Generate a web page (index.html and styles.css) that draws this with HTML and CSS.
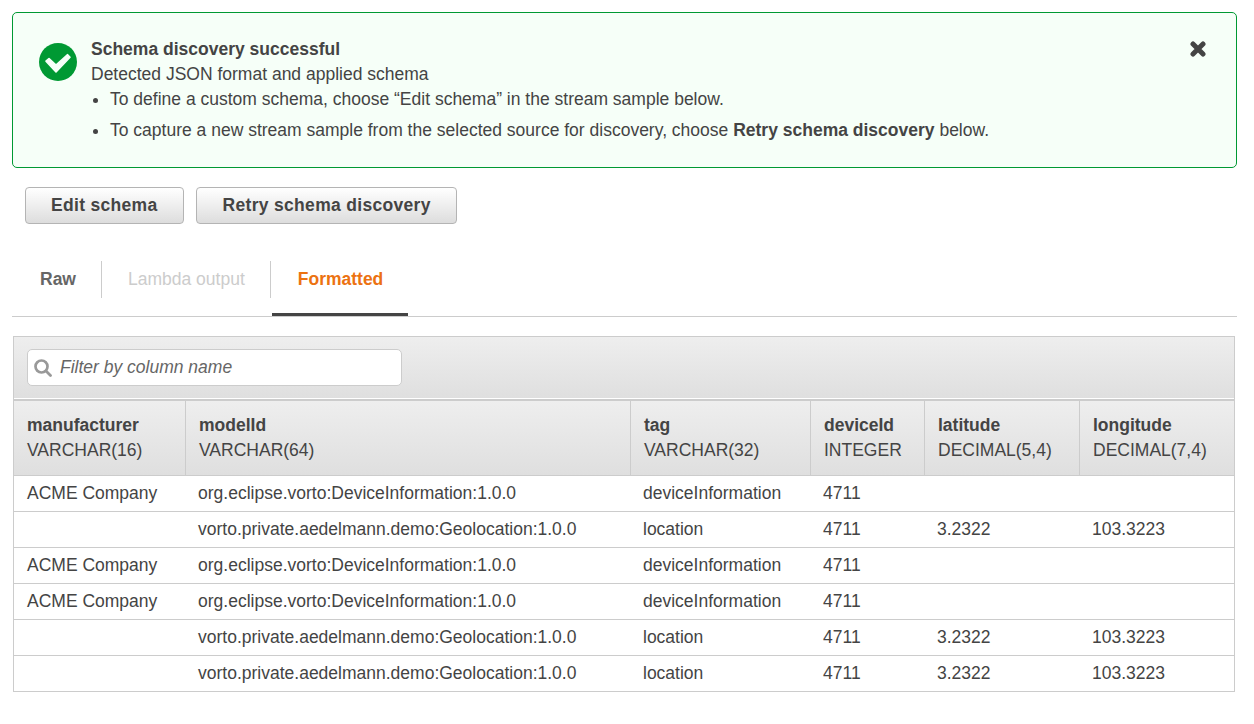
FILE: index.html
```html
<!DOCTYPE html>
<html lang="en">
<head>
<meta charset="utf-8">
<title>Schema discovery</title>
<link rel="stylesheet" href="styles.css">
</head>
<body>
<section class="alert">
  <svg class="alert-icon" viewBox="0 0 38 38"><circle cx="19" cy="19" r="19" fill="#093"/><path d="M7 18.200L10 15.600L17 22.200L28.600 11.700L31 14.300L17 29z" fill="#f6fff8" stroke="#f6fff8" stroke-width="1.600" stroke-linejoin="round"/></svg>
  <div class="alert-body">
    <strong>Schema discovery successful</strong>
    <div>Detected JSON format and applied schema</div>
    <ul class="alert-list">
      <li>To define a custom schema, choose “Edit schema” in the stream sample below.</li>
      <li>To capture a new stream sample from the selected source for discovery, choose <strong>Retry schema discovery</strong> below.</li>
    </ul>
  </div>
  <svg class="alert-close" viewBox="0 0 16 16"><path d="M3 3l10 10M13 3L3 13" stroke="#444" stroke-width="5" stroke-linecap="round"/></svg>
</section>
<div class="actions">
  <button class="btn">Edit schema</button>
  <button class="btn btn-wide">Retry schema discovery</button>
</div>
<nav class="tabs">
  <a class="tab">Raw</a>
  <a class="tab disabled">Lambda output</a>
  <a class="tab active">Formatted</a>
</nav>
<section class="grid">
  <div class="filter-bar">
    <label class="filter">
      <svg class="search" viewBox="0 0 18 18"><circle cx="7.500" cy="7.500" r="6" fill="none" stroke="#999" stroke-width="2.700"/><path d="M12 12l4.500 4.500" stroke="#999" stroke-width="2.800" stroke-linecap="round"/></svg>
      <span>Filter by column name</span>
    </label>
  </div>
  <table class="data">
    <colgroup><col class="c1"><col class="c2"><col class="c3"><col class="c4"><col class="c5"><col class="c6"></colgroup>
    <thead>
      <tr>
        <th>manufacturer<span>VARCHAR(16)</span></th>
        <th>modelId<span>VARCHAR(64)</span></th>
        <th>tag<span>VARCHAR(32)</span></th>
        <th>deviceId<span>INTEGER</span></th>
        <th>latitude<span>DECIMAL(5,4)</span></th>
        <th>longitude<span>DECIMAL(7,4)</span></th>
      </tr>
    </thead>
    <tbody>
      <tr><td>ACME Company</td><td>org.eclipse.vorto:DeviceInformation:1.0.0</td><td>deviceInformation</td><td>4711</td><td></td><td></td></tr>
      <tr><td></td><td>vorto.private.aedelmann.demo:Geolocation:1.0.0</td><td>location</td><td>4711</td><td>3.2322</td><td>103.3223</td></tr>
      <tr><td>ACME Company</td><td>org.eclipse.vorto:DeviceInformation:1.0.0</td><td>deviceInformation</td><td>4711</td><td></td><td></td></tr>
      <tr><td>ACME Company</td><td>org.eclipse.vorto:DeviceInformation:1.0.0</td><td>deviceInformation</td><td>4711</td><td></td><td></td></tr>
      <tr><td></td><td>vorto.private.aedelmann.demo:Geolocation:1.0.0</td><td>location</td><td>4711</td><td>3.2322</td><td>103.3223</td></tr>
      <tr><td></td><td>vorto.private.aedelmann.demo:Geolocation:1.0.0</td><td>location</td><td>4711</td><td>3.2322</td><td>103.3223</td></tr>
    </tbody>
  </table>
</section>
</body>
</html>
```
FILE: styles.css
```css
* { box-sizing: border-box; }
body {
  margin: 0;
  padding: 12px 17px 0 12px;
  background: #fff;
  color: #444;
  font: 17.5px/25px "Liberation Sans", Arial, sans-serif;
}
.alert {
  display: flex;
  height: 156px;
  padding: 24px 30px 0 26px;
  border: 1px solid #093;
  border-radius: 5px;
  background: #f6fff8;
}
.alert-icon { width: 38px; height: 38px; margin-top: 6px; }
.alert-body { flex: 1; padding-left: 14px; }
.alert-body > strong { display: block; }
.alert-list { margin: 0; padding-left: 19px; }
.alert-list li { margin-bottom: 6px; }
.alert-close { width: 16px; height: 16px; margin-top: 4px; }
.actions { display: flex; gap: 12px; padding: 19px 0 0 13px; }
.btn {
  height: 37px;
  padding: 0 25px;
  border: 1px solid #b4b4b4;
  border-radius: 4px;
  background: linear-gradient(#fff, #ddd);
  color: #444;
  font: bold 17.5px/25px "Liberation Sans", Arial, sans-serif;
  letter-spacing: .3125px;
}
.btn-wide { padding-left: 26px; }
.tabs {
  display: flex;
  height: 56px;
  margin-top: 37px;
  border-bottom: 1px solid #ccc;
}
.tab {
  height: 37px;
  padding: 6px 25px 0 26px;
  border-right: 1px solid #ccc;
  color: #666;
  font-weight: bold;
}
.tab:first-child { padding-left: 28px; }
.tab.disabled { color: #ccc; font-weight: normal; }
.tab.active {
  height: 55px;
  margin-left: 1px;
  border-right: 0;
  border-bottom: 3px solid #444;
  color: #ec7211;
}
.grid { width: 1222px; margin: 19px 0 0 1px; border: 1px solid #ccc; border-bottom: 0; }
.filter-bar {
  height: 62px;
  padding: 12px 13px 0;
  border-bottom: 1px solid #fff;
  background: linear-gradient(#eee, #dfdfdf);
}
.filter {
  display: flex;
  align-items: center;
  width: 375px;
  height: 37px;
  padding: 0 6px;
  border: 1px solid #ccc;
  border-radius: 5px;
  background: #fff;
  color: #666;
  font-style: italic;
}
.search { width: 18px; height: 18px; margin-right: 8px; }
.data {
  width: 100%;
  border-top: 2px solid #ccc;
  border-spacing: 0;
  table-layout: fixed;
}
.c1 { width: 172px; }
.c2 { width: 445px; }
.c3 { width: 180px; }
.c4 { width: 114px; }
.c5 { width: 155px; }
.c6 { width: 154px; }
.data th {
  height: 75px;
  padding: 0 0 0 13px;
  border-right: 1px solid #ccc;
  border-bottom: 1px solid #ccc;
  background: linear-gradient(#eee, #dfdfdf);
  text-align: left;
}
.data th:last-child { border-right: 0; }
.data th span { display: block; font-weight: normal; }
.data td {
  height: 36px;
  padding: 0 0 0 12px;
  border-bottom: 1px solid #ccc;
}
.data td:first-child { padding-left: 13px; }
```
